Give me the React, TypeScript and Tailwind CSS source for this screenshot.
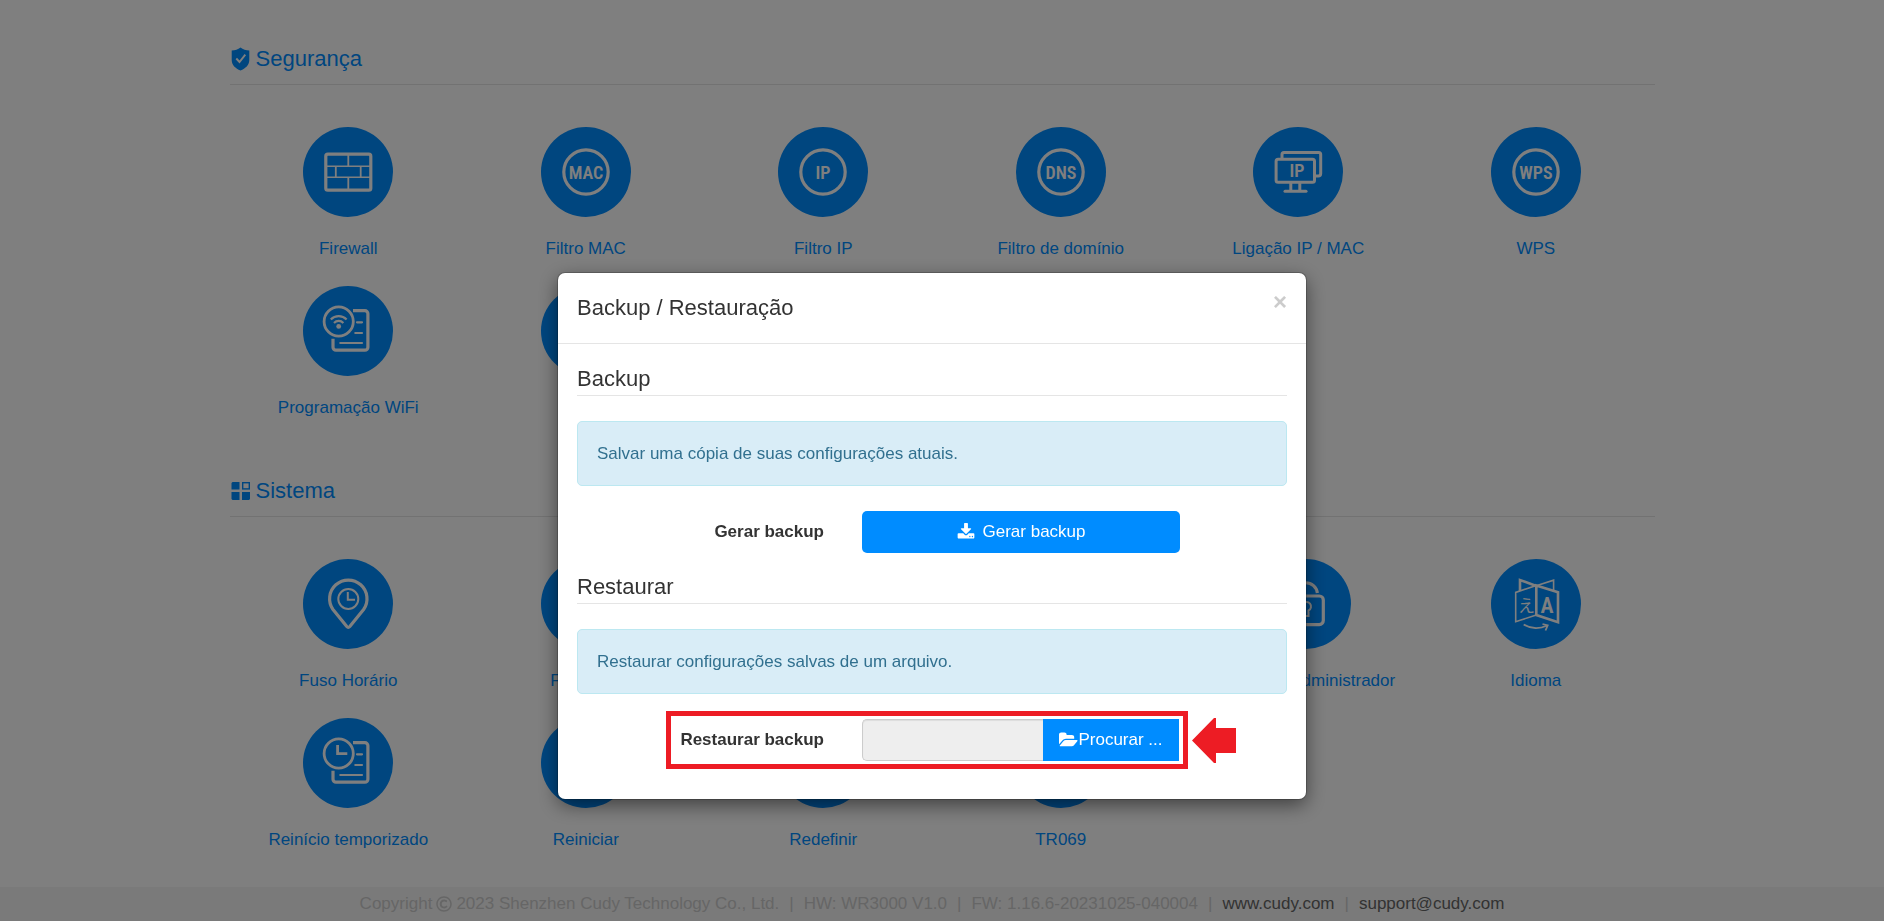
import type {ReactNode} from "react";
import {FaRegCopyright} from "react-icons/fa";

type Item = {
    label: string;
    icon: ReactNode;
}

const badgeFont = "[font-family:'Liberation_Sans_Narrow','Roboto_Condensed',sans-serif] font-semibold";

function RoundText({text}: { text: string }) {
    return (
        <>
            <circle cx="45" cy="45" r="22.2" strokeWidth="3.2"/>
            <text x="45" y="51.5" fontSize="18" textAnchor="middle" fill="white" stroke="none"
                  className={badgeFont}>{text}</text>
        </>
    )
}

function Sheet() {
    return (
        <>
            <path d="M50 24.7H61.9a3 3 0 0 1 3 3V61.2a3 3 0 0 1-3 3H33a3 3 0 0 1-3-3V52.7" strokeWidth="3.2"/>
            <path d="M54 36.3h5M52.3 47h6.7M37.3 57H59" strokeWidth="2.2" strokeLinecap="round"/>
            <circle cx="35.7" cy="35.5" r="14.6" strokeWidth="2.8"/>
        </>
    )
}

const firewall = (
    <>
        <rect x="22.8" y="27.2" width="45" height="36" rx="2" strokeWidth="3.2"/>
        <path d="M24 39.2H67M24 50.2H67" strokeWidth="1.4"/>
        <path d="M45.3 28V39M45.3 50V63M32.8 39V50M57.7 39V50" strokeWidth="1.8"/>
    </>
)

const binding = (
    <>
        <rect x="23.1" y="32.2" width="38.4" height="23" rx="2" strokeWidth="3"/>
        <path d="M29 31V27.5a2 2 0 0 1 2-2H65.7a2 2 0 0 1 2 2V46.5a2.5 2.5 0 0 1-2.5 2.5H62" strokeWidth="3"/>
        <path d="M37.8 56V64M46.8 56V64" strokeWidth="3"/>
        <path d="M32 64.3H53" strokeWidth="3" strokeLinecap="round"/>
        <text x="44" y="50" fontSize="18" textAnchor="middle" fill="white" stroke="none"
              className={badgeFont}>IP</text>
    </>
)

const wifiSchedule = (
    <>
        <Sheet/>
        <circle cx="35.7" cy="40.4" r="2.4" fill="white" stroke="none"/>
        <path d="M27.8 33.4a11 11 0 0 1 15.8 0M31 36.9a6.6 6.6 0 0 1 9.4 0" strokeWidth="2.2"/>
    </>
)

const timedReboot = (
    <>
        <Sheet/>
        <path d="M34.6 27V35.6H44.3" strokeWidth="2.8"/>
    </>
)

const timeZone = (
    <>
        <path d="M46.8 67.5Q45.3 69.2 43.8 67.5L30 50.5A18.7 18.7 0 1 1 60.600 50.5Z" strokeWidth="3.2"
              strokeLinejoin="round"/>
        <circle cx="45.3" cy="40" r="10" strokeWidth="2"/>
        <path d="M44.8 33V40.7H52" strokeWidth="2"/>
    </>
)

const lock = (
    <>
        <rect x="27.3" y="37" width="35" height="28.600" rx="4" strokeWidth="3.2"/>
        <path d="M33 37V34a11.800 11.800 0 0 1 23.4 0" strokeWidth="3.2"/>
        <path d="M43.5 57V51.5a4.500 4.500 0 1 1 4 0V57Z" strokeWidth="2"/>
    </>
)

const language = (
    <>
        <path d="M45.3 26.5L24.7 33.4V62.7L45.3 56" strokeWidth="1.6"/>
        <path d="M45.3 26.5L67 33.2V63.2L45.3 56Z" strokeWidth="2.6"/>
        <path d="M29 32V21L45.3 27" strokeWidth="2.6"/>
        <path d="M46 26.5L62.6 21.2V31" strokeWidth="1.6"/>
        <path d="M32.7 65.5C40 70 49 70 56 66.5M51.5 65L56.7 66.3L54.5 71.5" strokeWidth="1.8"/>
        <text x="35.5" y="53" fontSize="17" textAnchor="middle" fill="white" stroke="none"
              className="[font-family:'Noto_Sans_CJK_JP',sans-serif]">え</text>
        <text x="56" y="54" fontSize="22" textAnchor="middle" fill="white" stroke="none"
              className={badgeFont}>A</text>
    </>
)

const plain = <circle cx="45" cy="45" r="22.2" strokeWidth="3.2"/>

const security: Item[] = [
    {label: "Firewall", icon: firewall},
    {label: "Filtro MAC", icon: <RoundText text="MAC"/>},
    {label: "Filtro IP", icon: <RoundText text="IP"/>},
    {label: "Filtro de domínio", icon: <RoundText text="DNS"/>},
    {label: "Ligação IP / MAC", icon: binding},
    {label: "WPS", icon: <RoundText text="WPS"/>},
    {label: "Programação WiFi", icon: wifiSchedule},
    {label: "VPN", icon: plain},
]

const system: Item[] = [
    {label: "Fuso Horário", icon: timeZone},
    {label: "Firmware", icon: plain},
    {label: "Backup", icon: plain},
    {label: "Diagnóstico", icon: plain},
    {label: "Conta do Administrador", icon: lock},
    {label: "Idioma", icon: language},
    {label: "Reinício temporizado", icon: timedReboot},
    {label: "Reiniciar", icon: plain},
    {label: "Redefinir", icon: plain},
    {label: "TR069", icon: plain},
]

function Section({title, icon, items}: { title: string, icon: ReactNode, items: Item[] }) {
    return (
        <section>
            <h2 className="flex items-center gap-0.5 border-b border-[#e5e5e5] pb-3 text-[22px] leading-[26px] text-[#008cff]">
                {icon}
                {title}
            </h2>
            <ul className="grid grid-cols-6 pt-[42px]">
                {items.map((item) => (
                    <li key={item.label} className="px-[38px] pb-[25px]">
                        <a href="#" className="flex w-max min-w-full flex-col items-center gap-[19px] text-[#008cff]">
                            <svg viewBox="0 0 90 90" className="size-[90px] rounded-full bg-[#008cff]" fill="none"
                                 stroke="white">
                                {item.icon}
                            </svg>
                            <span className="leading-[25px]">{item.label}</span>
                        </a>
                    </li>
                ))}
            </ul>
        </section>
    )
}

const shieldIcon = (
    <svg viewBox="1 0 24 24" className="size-6">
        <path d="M11.5 0.5C14 2.5 17 3.3 20.3 3.4V13C20.3 18 16.5 21.5 11.5 23.5C6.5 21.5 2.7 18 2.7 13V3.4C6 3.3 9 2.5 11.5 0.5Z"
              fill="#008cff"/>
        <path d="M7.3 11.5L10.5 15L16.3 7.7" fill="none" stroke="white" strokeWidth="1.9"/>
    </svg>
)

const tilesIcon = (
    <svg viewBox="1 0 24 24" className="size-6">
        <path d="M3.5 3H10.5V10.5H2.5V4ZM2.5 13H10.5V21H3.5L2.5 20ZM13 13H21V20L20 21H13Z" fill="#008cff"/>
        <rect x="13.7" y="3.7" width="6.6" height="6.2" fill="none" stroke="#008cff" strokeWidth="1.4"/>
    </svg>
)

function Alert({children}: { children: ReactNode }) {
    return (
        <div className="my-[25px] rounded-[5px] border border-[#bce8f1] bg-[#d9edf7] px-[19px] py-[18px] leading-[27px] text-[#31708f]">
            {children}
        </div>
    )
}

function ModalHeading({children}: { children: ReactNode }) {
    return <h4 className="border-b border-[#e5e5e5] text-[22px] leading-8">{children}</h4>
}

function BackupModal() {
    return (
        <div className="fixed inset-0 flex items-start justify-center bg-black/50 pt-[273px] pr-5">
            <div role="dialog" aria-labelledby="modal-title"
                 className="w-full max-w-[748px] rounded-[7px] bg-white text-[#333] shadow-[0_0_0_1px_rgba(0,0,0,0.2),0_6px_19px_rgba(0,0,0,0.5)]">
                <div className="flex items-start justify-between border-b border-[#e5e5e5] p-[19px]">
                    <h3 id="modal-title" className="text-[22px] leading-8">Backup / Restauração</h3>
                    <button aria-label="Fechar" className="text-2xl leading-5 font-bold text-[#ccc]">×</button>
                </div>
                <div className="px-[19px] pt-[19px] pb-[38px]">
                    <ModalHeading>Backup</ModalHeading>
                    <Alert>Salvar uma cópia de suas configurações atuais.</Alert>
                    <div className="mb-[18px] grid grid-cols-[285fr_318fr_107fr] items-center">
                        <label htmlFor="generate" className="pr-[38px] text-right font-bold">Gerar backup</label>
                        <button id="generate"
                                className="flex h-[42px] items-center justify-center gap-2 rounded-[5px] bg-[#008cff] text-white">
                            <svg viewBox="0 0 1792 1792" className="size-[18px]" fill="currentColor">
                                <path d="M1344 1344q0-26-19-45t-45-19-45 19-19 45 19 45 45 19 45-19 19-45zm256 0q0-26-19-45t-45-19-45 19-19 45 19 45 45 19 45-19 19-45zm128-224v320q0 40-28 68t-68 28h-1472q-40 0-68-28t-28-68v-320q0-40 28-68t68-28h465l135 136q58 56 136 56t136-56l136-136h464q40 0 68 28t28 68zm-325-569q17 41-14 70l-448 448q-18 19-45 19t-45-19l-448-448q-31-29-14-70 17-39 59-39h256v-448q0-26 19-45t45-19h256q26 0 45 19t19 45v448h256q42 0 59 39z"/>
                            </svg>
                            Gerar backup
                        </button>
                    </div>
                    <ModalHeading>Restaurar</ModalHeading>
                    <Alert>Restaurar configurações salvas de um arquivo.</Alert>
                    <div className="relative grid grid-cols-[285fr_318fr_107fr] items-center">
                        <label htmlFor="restore" className="pr-[38px] text-right font-bold">Restaurar backup</label>
                        <div className="flex h-[42px] pr-px">
                            <input id="restore" type="text" readOnly
                                   className="w-0 grow rounded-l-[5px] border border-r-0 border-[#ccc] bg-[#eee] px-4 shadow-[inset_0_1px_1px_rgba(0,0,0,0.075)]"/>
                            <button className="flex w-[136px] items-center justify-center bg-[#008cff] text-white">
                                <svg viewBox="0 0 1920 1792" className="h-[18px] w-[19px]" fill="currentColor">
                                    <path d="M1879 952q0 31-31 66l-336 396q-43 51-120.5 86.5t-143.5 35.5h-1088q-34 0-60.5-13t-26.5-43q0-31 31-66l336-396q43-51 120.5-86.5t143.5-35.5h1088q34 0 60.5 13t26.5 43zm-343-344v160h-832q-94 0-197 47.5t-164 119.5l-337 396-5 6q0-4-.5-12.5t-.5-12.5v-960q0-92 66-158t158-66h320q92 0 158 66t66 158v32h544q92 0 158 66t66 158z"/>
                                </svg>
                                Procurar ...
                            </button>
                        </div>
                        <div className="pointer-events-none absolute -inset-y-2 right-[99px] left-[89px] border-[5px] border-[#ed1c24]"/>
                        <svg viewBox="0 0 44 45" className="absolute right-[51px] h-[45px] w-11" fill="#ed1c24">
                            <path d="M0 22.5L22 0H24V10H44V35H24V45H22Z"/>
                        </svg>
                    </div>
                </div>
            </div>
        </div>
    )
}

export default function App() {
    const divider = <span className="mx-[10px]">|</span>

    return (
        <div className="flex min-h-screen flex-col bg-white font-['Liberation_Sans',Arial,sans-serif] text-[17px]">
            <main className="mx-auto w-full max-w-[1425px] grow pt-[46px]">
                <Section title="Segurança" icon={shieldIcon} items={security}/>
                <div className="pt-[33px]">
                    <Section title="Sistema" icon={tilesIcon} items={system}/>
                </div>
            </main>
            <footer
                className="flex items-center justify-center bg-[#f5f5f5] py-1 pr-5 leading-[26px] text-[#ccc]">
                <span className="flex items-center gap-1">
                    Copyright <FaRegCopyright className="size-4"/> 2023 Shenzhen Cudy Technology Co., Ltd.
                </span>
                {divider}
                <span>HW: WR3000 V1.0</span>
                {divider}
                <span>FW: 1.16.6-20231025-040004</span>
                {divider}
                <a href="#" className="text-[#666]">www.cudy.com</a>
                {divider}
                <a href="#" className="text-[#666]">support@cudy.com</a>
            </footer>
            <BackupModal/>
        </div>
    )
}
